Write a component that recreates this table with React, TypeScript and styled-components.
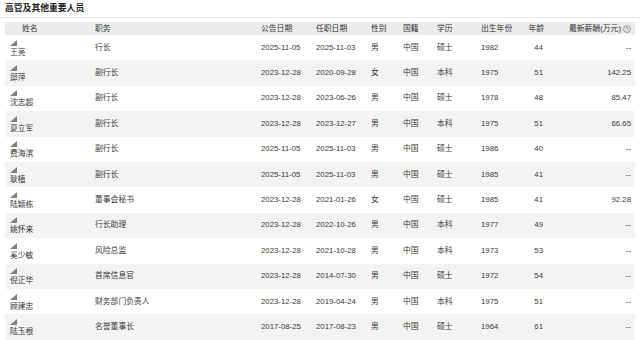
import React from "react";
import styled, { createGlobalStyle } from "styled-components";

const Global = createGlobalStyle`
  html, body { margin: 0; padding: 0; background: #ffffff; }
  body { font-family: "Liberation Sans", "Noto Sans CJK SC", sans-serif; }
`;

const COLS = "85px 166px 55px 55px 32px 34px 44px 39px 33px 87px";

const Page = styled.div`
  width: 640px;
  height: 340px;
  overflow: hidden;
`;

const Title = styled.div`
  padding: 3px 5px 3px;
  line-height: 11px;
  font-size: 8.8px;
  font-weight: 700;
  color: #222;
  border-bottom: 1px solid #e6e6e6;
`;

const Table = styled.div`
  margin: 4px 5px 0;
  width: 630px;
`;

const HeaderRow = styled.div`
  display: grid;
  grid-template-columns: ${COLS};
  height: 13px;
  background: #ececec;
  align-items: center;
`;

const Row = styled.div<{ $striped: boolean }>`
  display: grid;
  grid-template-columns: ${COLS};
  height: 25.4px;
  background: ${(p) => (p.$striped ? "#f3f3f3" : "#ffffff")};
  align-items: center;
`;

const HeadCell = styled.div<{ $align?: "left" | "right"; $indent?: number }>`
  font-size: 7.8px;
  line-height: 10px;
  color: #333;
  white-space: nowrap;
  padding: 0 ${(p) => (p.$align === "right" ? 4 : 0)}px 0 ${(p) => p.$indent ?? 5}px;
  display: flex;
  align-items: center;
  justify-content: ${(p) => (p.$align === "right" ? "flex-end" : "flex-start")};
  gap: 2px;
`;

const Cell = styled.div<{ $align?: "left" | "right"; $pr?: number }>`
  font-size: 7.8px;
  line-height: 10px;
  color: #3a3a3a;
  white-space: nowrap;
  text-align: ${(p) => p.$align ?? "left"};
  padding: 0 ${(p) => (p.$align === "right" ? p.$pr ?? 5 : 0)}px 0 ${(p) => (p.$align === "right" ? 0 : 5)}px;
`;

const NameCell = styled.div`
  display: flex;
  flex-direction: column;
  align-items: flex-start;
  gap: 2px;
  padding: 1px 0 0 5px;
  font-size: 7.8px;
  line-height: 9px;
  color: #333;
`;

const Wedge = styled.svg`
  display: block;
  width: 7px;
  height: 6px;
`;

const HelpSvg = styled.svg`
  display: block;
  width: 8px;
  height: 8px;
`;

const Triangle = () => (
  <Wedge viewBox="0 0 7 6">
    <polygon points="0,6 7,6 7,0" fill="#808080" />
  </Wedge>
);

const Help = () => (
  <HelpSvg viewBox="0 0 16 16">
    <circle cx="8" cy="8" r="7" fill="none" stroke="#666" strokeWidth="1.2" />
    <path d="M5.9 6.2a2.1 2.1 0 0 1 4.2 0.3c0 1.4-2.1 1.7-2.1 3.1" fill="none" stroke="#666" strokeWidth="1.2" strokeLinecap="round" />
    <circle cx="8" cy="11.8" r="0.8" fill="#666" />
  </HelpSvg>
);

type P = [string, string, string, string, string, string, string, string, string, string];

const people: P[] = [
  ["王亮", "行长", "2025-11-05", "2025-11-03", "男", "中国", "硕士", "1982", "44", "--"],
  ["邱萍", "副行长", "2023-12-28", "2020-09-28", "女", "中国", "本科", "1975", "51", "142.25"],
  ["沈志超", "副行长", "2023-12-28", "2023-06-26", "男", "中国", "硕士", "1978", "48", "85.47"],
  ["夏立军", "副行长", "2023-12-28", "2023-12-27", "男", "中国", "本科", "1975", "51", "66.65"],
  ["费海滨", "副行长", "2025-11-05", "2025-11-03", "男", "中国", "硕士", "1986", "40", "--"],
  ["耿植", "副行长", "2025-11-05", "2025-11-03", "男", "中国", "硕士", "1985", "41", "--"],
  ["陆颖栋", "董事会秘书", "2023-12-28", "2021-01-26", "女", "中国", "硕士", "1985", "41", "92.28"],
  ["姚怀来", "行长助理", "2023-12-28", "2022-10-26", "男", "中国", "本科", "1977", "49", "--"],
  ["奚少敏", "风险总监", "2023-12-28", "2021-10-28", "男", "中国", "本科", "1973", "53", "--"],
  ["倪正华", "首席信息官", "2023-12-28", "2014-07-30", "男", "中国", "硕士", "1972", "54", "--"],
  ["顾建忠", "财务部门负责人", "2023-12-28", "2019-04-24", "男", "中国", "本科", "1975", "51", "--"],
  ["陆玉根", "名誉董事长", "2017-08-25", "2017-08-23", "男", "中国", "硕士", "1964", "61", "--"],
];

export default function App() {
  return (
    <Page>
      <Global />
      <Title>高管及其他重要人员</Title>
      <Table>
        <HeaderRow>
          <HeadCell $indent={17}>姓名</HeadCell>
          <HeadCell>职务</HeadCell>
          <HeadCell>公告日期</HeadCell>
          <HeadCell>任职日期</HeadCell>
          <HeadCell>性别</HeadCell>
          <HeadCell>国籍</HeadCell>
          <HeadCell>学历</HeadCell>
          <HeadCell>出生年份</HeadCell>
          <HeadCell $align="right">年龄</HeadCell>
          <HeadCell $align="right">
            最新薪酬(万元)
            <Help />
          </HeadCell>
        </HeaderRow>
        {people.map((p, i) => (
          <Row key={p[0]} $striped={i % 2 === 1}>
            <NameCell>
              <Triangle />
              {p[0]}
            </NameCell>
            <Cell>{p[1]}</Cell>
            <Cell>{p[2]}</Cell>
            <Cell>{p[3]}</Cell>
            <Cell>{p[4]}</Cell>
            <Cell>{p[5]}</Cell>
            <Cell>{p[6]}</Cell>
            <Cell>{p[7]}</Cell>
            <Cell $align="right">{p[8]}</Cell>
            <Cell $align="right" $pr={4}>{p[9]}</Cell>
          </Row>
        ))}
      </Table>
    </Page>
  );
}
